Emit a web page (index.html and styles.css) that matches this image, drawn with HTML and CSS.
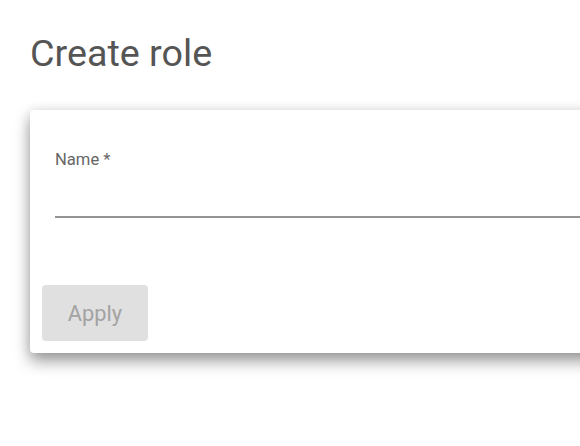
FILE: index.html
```html
<!DOCTYPE html>
<html>
<head>
<meta charset="utf-8">
<link rel="stylesheet" href="styles.css">
</head>
<body>
<div class="page">
  <h1 class="title">Create role</h1>
  <div class="card">
    <div class="field">
      <label class="label">Name *</label>
      <div class="input"></div>
    </div>
    <div class="actions">
      <button class="btn" disabled>Apply</button>
    </div>
  </div>
</div>
</body>
</html>
```

FILE: styles.css
```css
html, body {
  margin: 0;
  padding: 0;
  background: #ffffff;
  overflow: hidden;
}
body {
  font-family: Roboto, "Liberation Sans", sans-serif;
  width: 580px;
  height: 446px;
}
.page {
  padding: 32px 0 0 30px;
}
.title {
  margin: 0;
  font-size: 37.7px;
  font-weight: 400;
  line-height: 42px;
  color: #555555;
}
.card {
  margin-top: 36px;
  width: 640px;
  height: 243px;
  box-sizing: border-box;
  background: #ffffff;
  border-radius: 4px;
  box-shadow: 0 8px 16px rgba(0, 0, 0, 0.4), 0 0 12px rgba(0, 0, 0, 0.08);
  display: flex;
  flex-direction: column;
  justify-content: space-between;
}
.field {
  padding: 40px 0 0 25px;
}
.label {
  display: block;
  font-size: 16.6px;
  line-height: 19px;
  color: #666666;
}
.input {
  margin-top: 47px;
  height: 0;
  border-bottom: 2px solid #949494;
}
.actions {
  padding: 0 0 12px 12px;
}
.btn {
  width: 106px;
  height: 56px;
  border: none;
  border-radius: 4px;
  background: #e0e0e0;
  color: #a3a3a3;
  font-family: Roboto, "Liberation Sans", sans-serif;
  font-size: 21.8px;
  padding: 0;
}
```
